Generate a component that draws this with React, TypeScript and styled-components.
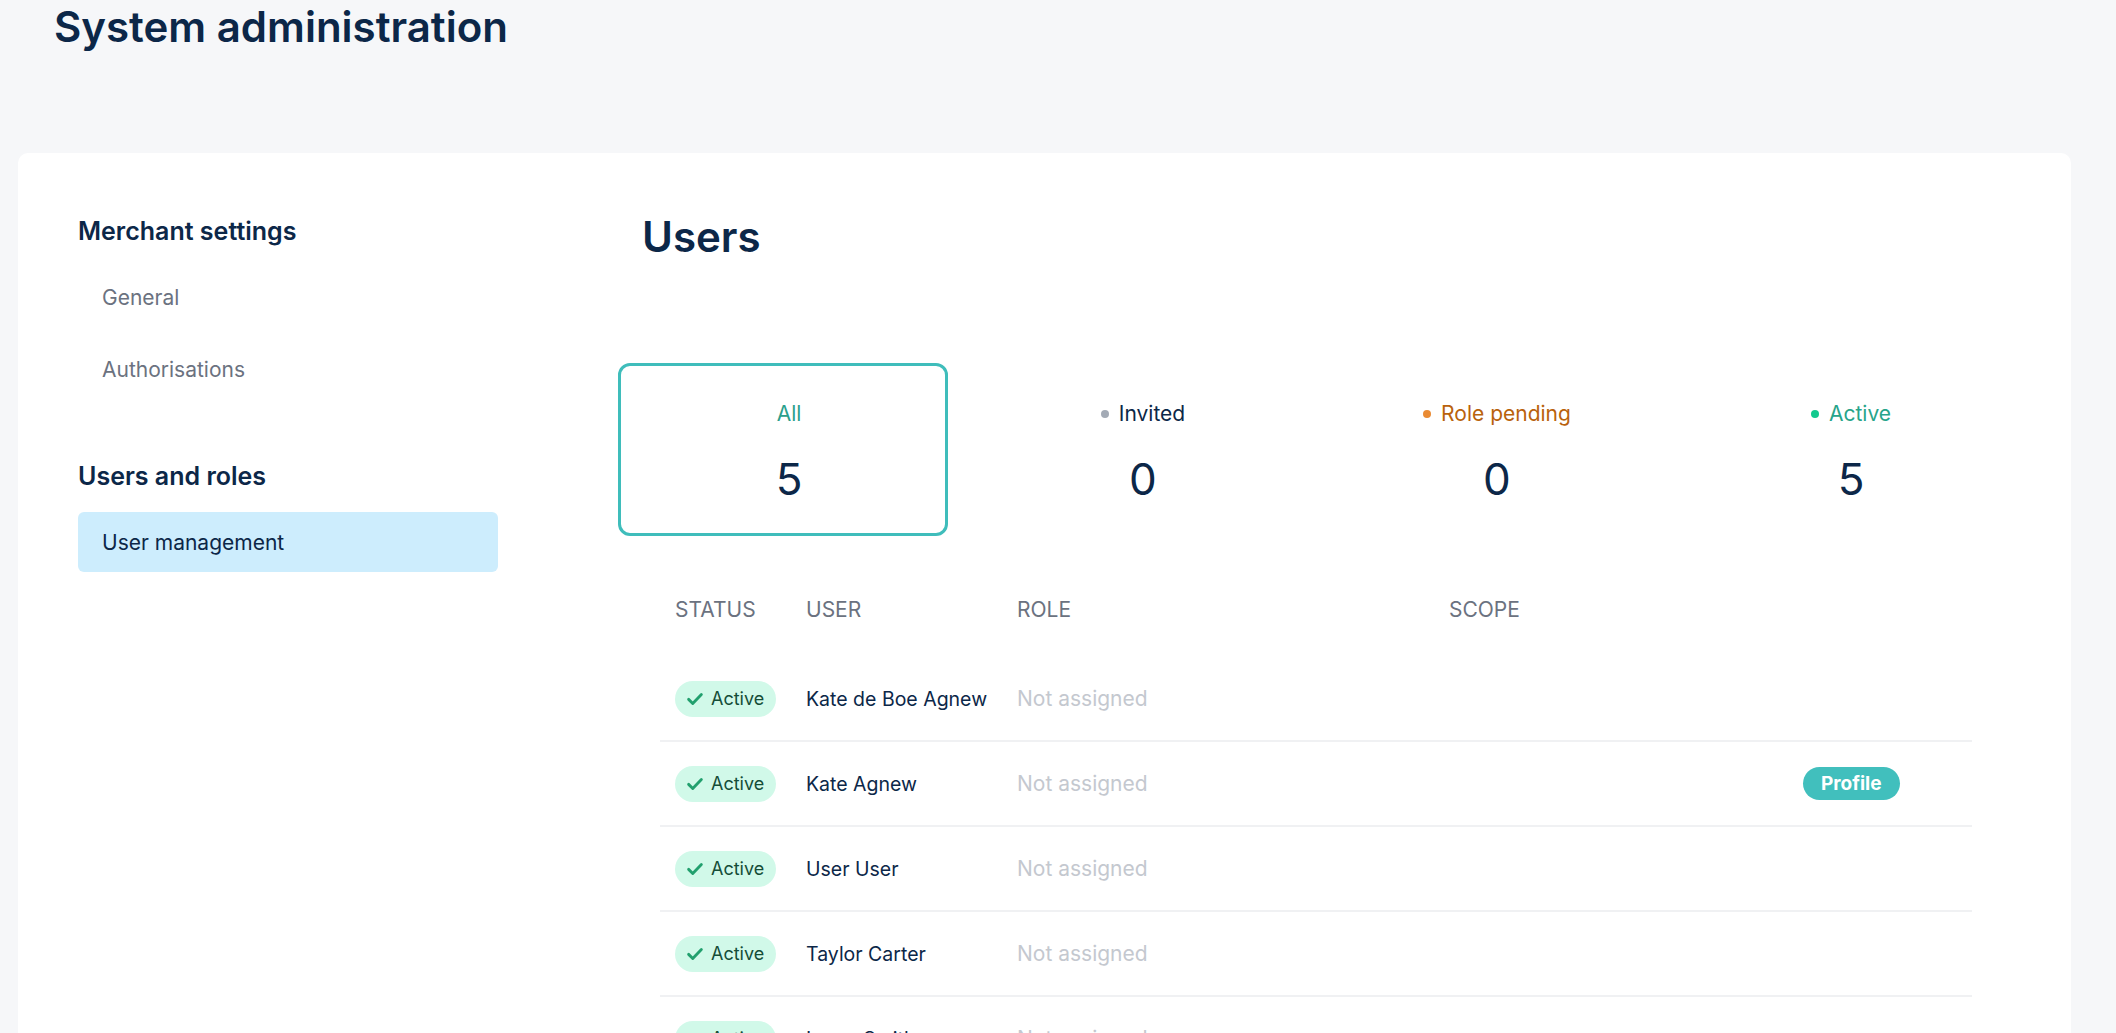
import React from "react";
import styled, { createGlobalStyle } from "styled-components";

const navy = "#0c2748";

const GlobalStyle = createGlobalStyle`
  body {
    margin: 0;
    background: #f6f7f9;
    font-family: Inter, "Noto Sans", sans-serif;
    color: ${navy};
  }
`;

interface IUser {
  name: string;
  showProfile?: boolean;
}

const users: IUser[] = [
  { name: "Kate de Boe Agnew" },
  { name: "Kate Agnew", showProfile: true },
  { name: "User User" },
  { name: "Taylor Carter" },
  { name: "Laura Smith" },
];

const stats = [
  { label: "All", value: 5, color: "#2b9f8c", active: true },
  { label: "Invited", value: 0, color: navy, dot: "#a3aab5" },
  { label: "Role pending", value: 0, color: "#b9620c", dot: "#ea8b33" },
  { label: "Active", value: 5, color: "#27a48a", dot: "#13c98e" },
];

const CheckIcon = () => (
  <svg width="18" height="18" viewBox="0 0 24 24" fill="none">
    <path d="M3.5 12.5l5.5 5.5L20.5 6" stroke="#22a06e" strokeWidth="3.8" strokeLinecap="round" strokeLinejoin="round" />
  </svg>
);

const App: React.FC = () => {
  return (
    <>
      <GlobalStyle />
      <Page>
        <Title>System administration</Title>
        <Card>
          <Sidebar>
            <NavGroup>
              <GroupTitle>Merchant settings</GroupTitle>
              <NavList>
                <NavItem>General</NavItem>
                <NavItem>Authorisations</NavItem>
              </NavList>
            </NavGroup>
            <NavGroup>
              <GroupTitle>Users and roles</GroupTitle>
              <NavList>
                <NavItem $active>User management</NavItem>
              </NavList>
            </NavGroup>
          </Sidebar>

          <Main>
            <Heading>Users</Heading>

            <Stats>
              {stats.map((s) => (
                <StatTab key={s.label} $active={!!s.active}>
                  <StatLabel $color={s.color}>
                    {s.dot && <Dot $color={s.dot} />}
                    {s.label}
                  </StatLabel>
                  <StatValue>{s.value}</StatValue>
                </StatTab>
              ))}
            </Stats>

            <Table>
              <HeaderRow>
                <span>STATUS</span>
                <span>USER</span>
                <span>ROLE</span>
                <span>SCOPE</span>
              </HeaderRow>
              {users.map((u) => (
                <Row key={u.name}>
                  <div>
                    <Badge>
                      <CheckIcon />
                      Active
                    </Badge>
                  </div>
                  <Name>{u.name}</Name>
                  <Muted>Not assigned</Muted>
                  <span />
                  <div>{u.showProfile && <ProfileButton>Profile</ProfileButton>}</div>
                </Row>
              ))}
            </Table>
          </Main>
        </Card>
      </Page>
    </>
  );
};

const Page = styled.div`
  padding: 2px 45px 0 18px;
`;

const Title = styled.h1`
  margin: 0 0 101px 36px;
  font-size: 42px;
  line-height: 50px;
  font-weight: 600;
  color: ${navy};
`;

const Card = styled.div`
  display: flex;
  gap: 120px;
  min-height: 1000px;
  padding: 60px 61px 60px 60px;
  background: #ffffff;
  border-radius: 10px 10px 0 0;
`;

const Sidebar = styled.nav`
  width: 420px;
  flex-shrink: 0;
  display: flex;
  flex-direction: column;
  gap: 59px;
`;

const NavGroup = styled.div``;

const GroupTitle = styled.h3`
  margin: 0 0 18px;
  font-size: 25px;
  line-height: 36px;
  font-weight: 600;
  color: ${navy};
`;

const NavList = styled.div`
  display: flex;
  flex-direction: column;
  gap: 12px;
`;

const NavItem = styled.a<{ $active?: boolean }>`
  display: flex;
  align-items: center;
  height: 60px;
  padding-left: 24px;
  border-radius: 6px;
  font-size: 21px;
  color: ${(p) => (p.$active ? navy : "#6b7280")};
  background: ${(p) => (p.$active ? "#cdedfd" : "transparent")};
  cursor: pointer;
`;

const Main = styled.main`
  flex: 1;
  min-width: 0;
`;

const Heading = styled.h2`
  margin: 0 0 102px 24px;
  font-size: 42px;
  line-height: 48px;
  font-weight: 600;
  color: ${navy};
`;

const Stats = styled.div`
  display: grid;
  grid-template-columns: repeat(4, 330px);
  gap: 24px;
`;

const StatTab = styled.div<{ $active: boolean }>`
  box-sizing: border-box;
  height: 173px;
  padding: 33px 0 0 12px;
  display: flex;
  flex-direction: column;
  align-items: center;
  border: 3px solid ${(p) => (p.$active ? "#3fbdbb" : "transparent")};
  border-radius: 12px;
  cursor: pointer;
`;

const StatLabel = styled.div<{ $color: string }>`
  display: flex;
  align-items: center;
  gap: 10px;
  font-size: 21px;
  line-height: 30px;
  color: ${(p) => p.$color};
`;

const Dot = styled.span<{ $color: string }>`
  width: 8px;
  height: 8px;
  border-radius: 50%;
  background: ${(p) => p.$color};
`;

const StatValue = styled.div`
  margin-top: 23px;
  font-size: 44px;
  line-height: 54px;
  color: ${navy};
`;

const Table = styled.div`
  margin: 21px 38px 0 42px;
`;

const columns = "131px 211px 432px 354px 97px 1fr";

const HeaderRow = styled.div`
  display: grid;
  grid-template-columns: ${columns};
  align-items: center;
  height: 100px;
  padding: 4px 0 0 15px;
  box-sizing: border-box;
  font-size: 21px;
  color: #6b7280;
`;

const Row = styled.div`
  display: grid;
  grid-template-columns: ${columns};
  align-items: center;
  box-sizing: border-box;
  height: 85px;
  padding-left: 15px;
  border-bottom: 2px solid #f0f1f3;
`;

const Badge = styled.span`
  display: inline-flex;
  align-items: center;
  gap: 7px;
  height: 36px;
  padding: 0 12px 0 11px;
  border-radius: 18px;
  background: #d1f9e9;
  color: #144d37;
  font-size: 18px;
  font-weight: 400;
`;

const Name = styled.span`
  font-size: 19.5px;
  color: ${navy};
  white-space: nowrap;
`;

const Muted = styled.span`
  font-size: 21px;
  color: #c4c8cf;
`;

const ProfileButton = styled.button`
  height: 33px;
  padding: 0 18px;
  border: none;
  border-radius: 17px;
  background: #41bfbd;
  color: #ffffff;
  font-family: inherit;
  font-size: 19px;
  font-weight: 700;
  cursor: pointer;
`;

export default App;
